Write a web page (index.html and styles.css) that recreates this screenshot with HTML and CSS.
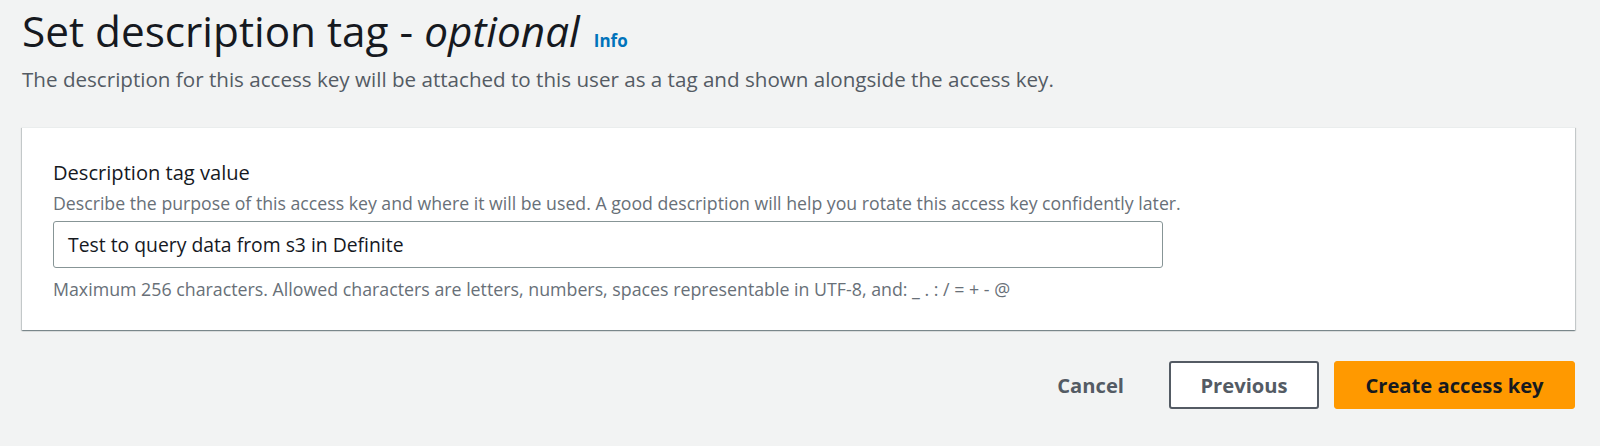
FILE: index.html
```html
<!DOCTYPE html>
<html>
<head>
<meta charset="utf-8">
<link rel="stylesheet" href="styles.css">
</head>
<body>
<div class="page">
  <header class="header">
    <h1 class="title">Set description tag - <em>optional</em><a class="info">Info</a></h1>
    <p class="subtitle">The description for this access key will be attached to this user as a tag and shown alongside the access key.</p>
  </header>
  <section class="card">
    <div class="field">
      <label class="label">Description tag value</label>
      <div class="desc">Describe the purpose of this access key and where it will be used. A good description will help you rotate this access key confidently later.</div>
      <div class="input">Test to query data from s3 in Definite</div>
      <div class="hint">Maximum 256 characters. Allowed characters are letters, numbers, spaces representable in UTF-8, and: _ . : / = + - @</div>
    </div>
  </section>
  <div class="actions">
    <button class="btn btn-link">Cancel</button>
    <button class="btn btn-normal">Previous</button>
    <button class="btn btn-primary">Create access key</button>
  </div>
</div>
</body>
</html>
```
FILE: styles.css
```css
html, body {
  margin: 0;
  padding: 0;
  background: #f2f3f3;
  font-family: "Open Sans", "Noto Sans", sans-serif;
  color: #16191f;
}
.page {
  padding: 0 25px 0 22px;
}
.header {
  padding-top: 1px;
}
.title {
  margin: 0;
  font-size: 42.3px;
  font-weight: 400;
  line-height: 60px;
  color: #16191f;
}
.title em {
  font-style: italic;
}
.info {
  font-size: 17px;
  line-height: 1;
  font-weight: 700;
  color: #0073bb;
  margin-left: 14px;
}
.subtitle {
  margin: 4px 0 0;
  font-size: 20.6px;
  line-height: 28px;
  color: #545b64;
}
.card {
  margin-top: 34px;
  background: #fff;
  border-top: 1px solid #eaeded;
  box-shadow: 0 1px 1px 0 rgba(0,28,36,.3), 1px 1px 1px 0 rgba(0,28,36,.15), -1px 1px 1px 0 rgba(0,28,36,.15);
  padding: 31px 31px 28px;
}
.field {
  display: flex;
  flex-direction: column;
}
.label {
  font-size: 20.1px;
  line-height: 28px;
  color: #16191f;
}
.desc {
  margin-top: 3px;
  font-size: 17.7px;
  line-height: 26px;
  color: #687078;
}
.input {
  margin-top: 5px;
  width: 1080px;
  height: 45px;
  box-sizing: content-box;
  border: 1px solid #879596;
  border-radius: 3px;
  padding: 0 14px;
  display: flex;
  align-items: center;
  font-size: 19.35px;
  color: #16191f;
}
.hint {
  margin-top: 8px;
  font-size: 17.8px;
  line-height: 26px;
  color: #687078;
}
.actions {
  margin-top: 31px;
  display: flex;
  justify-content: flex-end;
  align-items: center;
  gap: 15px;
}
.btn {
  font-family: "Open Sans", "Noto Sans", sans-serif;
  font-size: 20.2px;
  font-weight: 700;
  height: 48px;
  border-radius: 3px;
  padding: 0 20px;
  cursor: pointer;
}
.btn-link {
  background: transparent;
  border: 1px solid transparent;
  color: #545b64;
  margin-right: 9px;
}
.btn-normal {
  background: #fff;
  border: 2px solid #545b64;
  color: #545b64;
  width: 150px;
}
.btn-primary {
  background: #ff9900;
  border: 1px solid #ff9900;
  color: #16191f;
  width: 241px;
}
```
